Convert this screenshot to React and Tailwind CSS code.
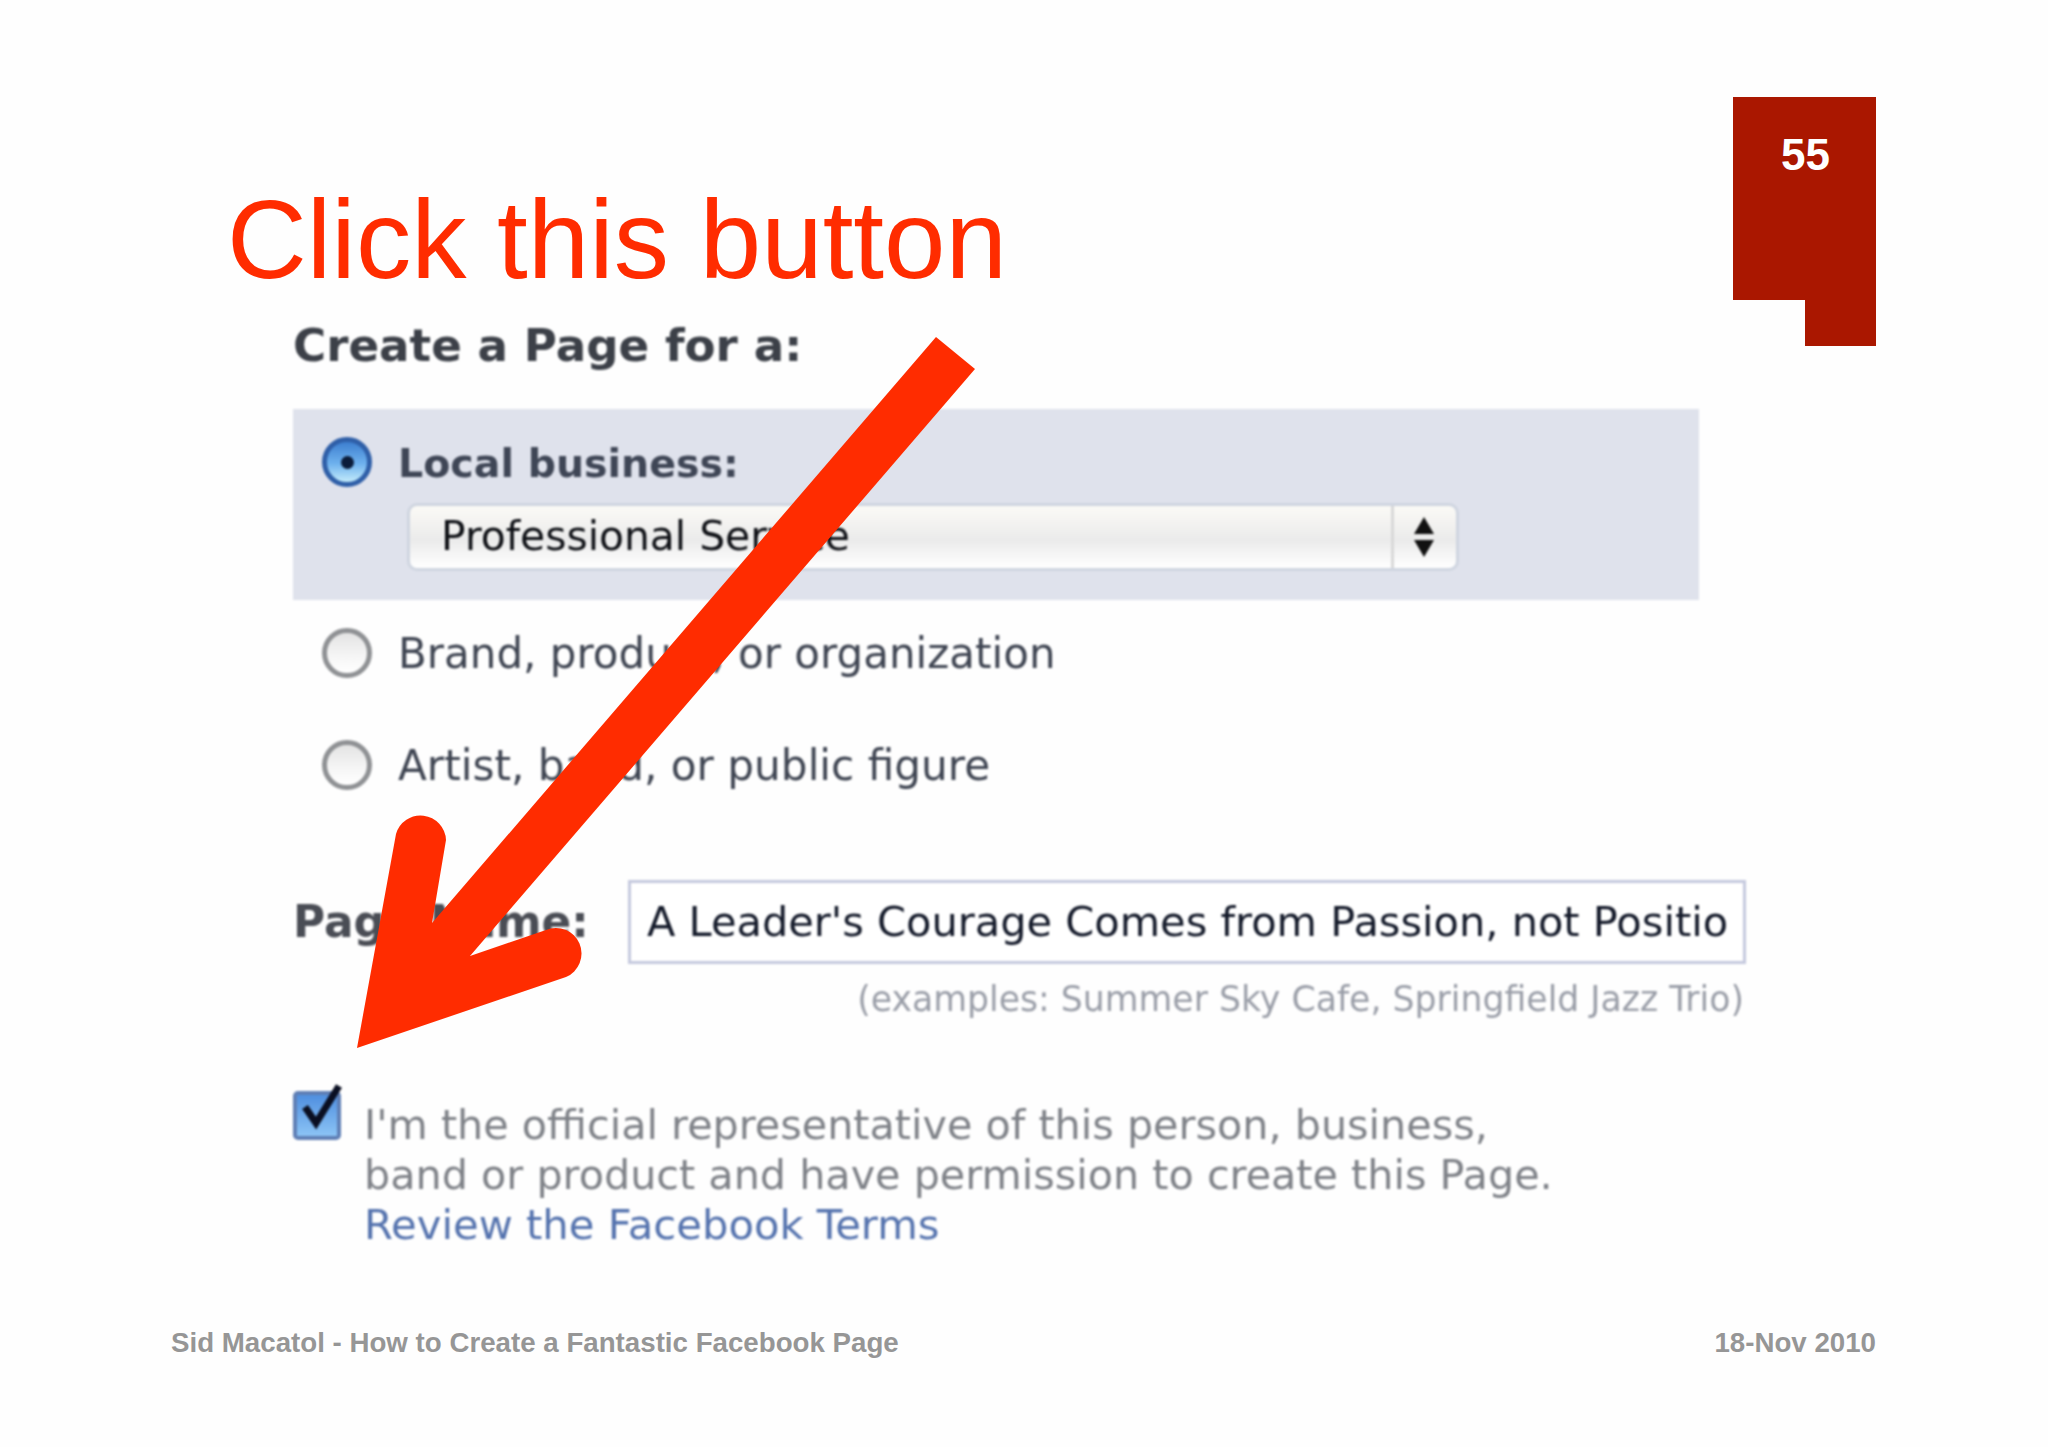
import React from 'react'

const lucida = 'font-["DejaVu_Sans",sans-serif]'

function Radio({ checked }) {
  if (checked) {
    return (
      <div className="w-[50px] h-[50px] shrink-0 rounded-full border-[5px] border-[#2f5fa8] bg-[linear-gradient(#3d7fd0,#6fb2ee_55%,#c4ecfb)] flex items-center justify-center">
        <div className="w-[13px] h-[13px] rounded-full bg-[#0b1c3a]" />
      </div>
    )
  }
  return <div className="w-[50px] h-[50px] shrink-0 rounded-full border-[5px] border-[#8f9194] bg-[linear-gradient(#e4e4e4,#f6f6f6_60%,#ffffff)]" />
}

function Arrow() {
  return (
    <svg className="absolute left-0 top-0 pointer-events-none" width="2048" height="1447" viewBox="0 0 2048 1447">
      <path
        fill="#ff2c00"
        d="M936 337 L975 369 L470 956 L432 923 Z M357 1048 L396 834 A25.500 25.500 0 0 1 446 840 L432 923 L470 956 L546 930 A25.500 25.500 0 0 1 566 977 Z"
      />
    </svg>
  )
}

export default function App() {
  return (
    <div className="relative w-[2048px] h-[1447px] overflow-hidden bg-[#fefefe] font-['Liberation_Sans',sans-serif]">
      <div className="flex justify-between items-start pl-[227px] pr-[172px] pt-[97px]">
        <h1 className="mt-[93px] text-[110.500px] leading-[100px] font-normal text-[#ff2c00]">Click this button</h1>
        <div className="relative w-[143px] h-[203px] bg-[#aa1700] pt-[36px] pl-[2px] text-center">
          <span className="text-[44px] leading-[44px] font-bold text-white">55</span>
          <div className="absolute right-0 top-[203px] w-[71px] h-[46px] bg-[#aa1700]" />
        </div>
      </div>

      <div className={`blur-[0.8px] ml-[293px] mt-[16px] ${lucida}`}>
        <h2 className="text-[45.200px] leading-[60px] font-bold text-[#3c4048]">Create a Page for a:</h2>

        <div className="mt-[33px] w-[1406px] h-[191px] bg-[#dfe2ec] pl-[29px] pt-[28px]">
          <div className="flex items-center gap-[26px] h-[50px]">
            <Radio checked />
            <span className="mt-[3px] text-[39.500px] font-bold text-[#3f4656]">Local business:</span>
          </div>
          <div className="ml-[85px] mt-[16px] w-[1052px] h-[68px] rounded-[10px] border-[3px] border-[#cfd5e0] bg-[linear-gradient(#fbfaf6,#ebebeb_55%,#ffffff)] flex items-center">
            <span className="flex-1 pl-[31px] text-[40.800px] text-[#0f1116]">Professional Service</span>
            <div className="w-[65px] h-full border-l-[3px] border-[#d8d8d8] flex items-center justify-center">
              <svg className="mr-[3px]" width="22" height="40" viewBox="0 0 22 40">
                <path d="M11 0 L21 17 L1 17 Z M1 23 L21 23 L11 40 Z" fill="#111" />
              </svg>
            </div>
          </div>
        </div>

        <div className="flex items-center gap-[26px] h-[50px] ml-[29px] mt-[28px]">
          <Radio />
          <span className="text-[42px] text-[#3f4552]">Brand, product, or organization</span>
        </div>
        <div className="flex items-center gap-[26px] h-[50px] ml-[29px] mt-[62px]">
          <Radio />
          <span className="mt-[2px] text-[42.200px] text-[#3f4552]">Artist, band, or public figure</span>
        </div>

        <div className="flex items-center mt-[90px]">
          <span className="w-[335px] text-[43.800px] font-bold text-[#4a4d55]">Page Name:</span>
          <div className="w-[1118px] h-[84px] border-[3px] border-[#c5c9de] bg-white pl-[16px] flex items-center whitespace-nowrap">
            <span className="text-[41.500px] text-[#141a2a]">A Leader's Courage Comes from Passion, not Positio</span>
          </div>
        </div>
        <div className="w-[1451px] text-right text-[34.700px] leading-[40px] mt-[15px] text-[#9a9ea8]">
          (examples: Summer Sky Cafe, Springfield Jazz Trio)
        </div>

        <div className="flex mt-[72px]">
          <div className="relative w-[48px] h-[49px] shrink-0 rounded-[5px] border-[4px] border-[#5f7fb5] bg-[linear-gradient(#4f8fe0,#8cc4f5)]">
            <svg className="absolute left-[4px] top-[-12px]" width="46" height="48" viewBox="0 0 46 48">
              <path d="M4 24 L15 40 L38 3" fill="none" stroke="#0a0f22" strokeWidth="7" />
            </svg>
          </div>
          <div className="ml-[23px] mt-[9px] text-[41.300px] leading-[50px] whitespace-nowrap text-[#7f8288]">
            <p>I'm the official representative of this person, business,</p>
            <p>band or product and have permission to create this Page.</p>
            <p className="text-[41.700px] text-[#5573ae]">Review the Facebook Terms</p>
          </div>
        </div>
      </div>

      <div className="absolute left-[171px] right-[172px] top-[1327px] flex justify-between text-[27.700px] leading-[32px] font-bold text-[#969696]">
        <span>Sid Macatol - How to Create a Fantastic Facebook Page</span>
        <span>18-Nov 2010</span>
      </div>

      <Arrow />
    </div>
  )
}
